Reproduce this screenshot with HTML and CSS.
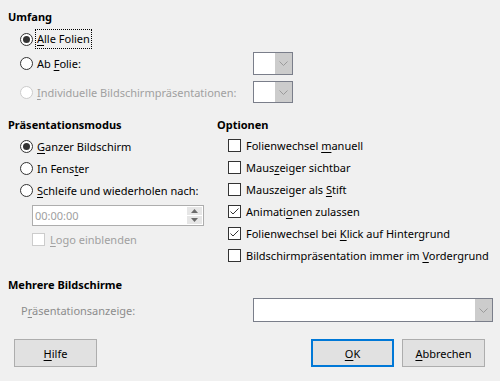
FILE: index.html
```html
<!DOCTYPE html>
<html lang="de">
<head>
<meta charset="utf-8">
<link rel="stylesheet" href="styles.css">
</head>
<body>
<div class="dialog">
  <section class="umfang">
    <div class="heading">Umfang</div>
    <div class="grid-range">
      <label class="row r1"><span class="radio on"></span><span class="focus"><u>A</u>lle Folien</span></label>
      <span></span>
      <label class="row r2"><span class="radio"></span><span>Ab <u>F</u>olie:</span></label>
      <div class="combo small c1"><span class="field"></span><span class="drop"><svg width="9" height="5" viewBox="0 0 9 5"><polyline points="0.5,0.5 4.5,4.5 8.5,0.5" fill="none" stroke="#9a9a9a" stroke-width="1"/></svg></span></div>
      <label class="row r3 disabled"><span class="radio dis"></span><span><u>I</u>ndividuelle Bildschirmpräsentationen:</span></label>
      <div class="combo small c2"><span class="field"></span><span class="drop"><svg width="9" height="5" viewBox="0 0 9 5"><polyline points="0.5,0.5 4.5,4.5 8.5,0.5" fill="none" stroke="#9a9a9a" stroke-width="1"/></svg></span></div>
    </div>
  </section>

  <section class="cols">
    <div class="col left">
      <div class="heading">Präsentationsmodus</div>
      <label class="row item"><span class="radio on"></span><span><u>G</u>anzer Bildschirm</span></label>
      <label class="row item"><span class="radio"></span><span>In Fens<u>t</u>er</span></label>
      <label class="row item"><span class="radio"></span><span><u>S</u>chleife und wiederholen nach:</span></label>
      <div class="spin">
        <span class="spin-text">00:00:00</span>
        <span class="spin-btns">
          <span class="sb"><svg width="7" height="4" viewBox="0 0 7 4"><polygon points="0,4 3.5,0 7,4" fill="#6a6a6a"/></svg></span>
          <span class="sb"><svg width="7" height="4" viewBox="0 0 7 4"><polygon points="0,0 3.5,4 7,0" fill="#6a6a6a"/></svg></span>
        </span>
      </div>
      <label class="row logo disabled"><span class="check dis"></span><span><u>L</u>ogo einblenden</span></label>
    </div>
    <div class="col right">
      <div class="heading">Optionen</div>
      <label class="row opt"><span class="check"></span><span>Folienwechsel <u>m</u>anuell</span></label>
      <label class="row opt"><span class="check"></span><span>Maus<u>z</u>eiger sichtbar</span></label>
      <label class="row opt"><span class="check"></span><span>Mauszeiger als <u>S</u>tift</span></label>
      <label class="row opt"><span class="check"><svg width="11" height="11" viewBox="0 0 11 11"><polyline points="1.5,5.5 4,8 9.5,2.5" fill="none" stroke="#333" stroke-width="1"/></svg></span><span>Animati<u>o</u>nen zulassen</span></label>
      <label class="row opt"><span class="check"><svg width="11" height="11" viewBox="0 0 11 11"><polyline points="1.5,5.5 4,8 9.5,2.5" fill="none" stroke="#333" stroke-width="1"/></svg></span><span>Folienwechsel bei <u>K</u>lick auf Hintergrund</span></label>
      <label class="row opt"><span class="check"></span><span>Bildschirmpräsentation immer im <u>V</u>ordergrund</span></label>
    </div>
  </section>

  <section class="multi">
    <div class="heading">Mehrere Bildschirme</div>
    <div class="multi-row">
      <span class="disabled-label">P<u>r</u>äsentationsanzeige:</span>
      <div class="combo wide"><span class="field"></span><span class="drop"><svg width="9" height="5" viewBox="0 0 9 5"><polyline points="0.5,0.5 4.5,4.5 8.5,0.5" fill="none" stroke="#9a9a9a" stroke-width="1"/></svg></span></div>
    </div>
  </section>

  <footer class="buttons">
    <button class="btn"><u>H</u>ilfe</button>
    <span class="spacer"></span>
    <button class="btn default"><u>O</u>K</button>
    <button class="btn"><u>A</u>bbrechen</button>
  </footer>
</div>
</body>
</html>
```

FILE: styles.css
```css
html, body {
  margin: 0;
  padding: 0;
  background: #f0f0f0;
}
body {
  width: 500px;
  height: 381px;
  overflow: hidden;
  font-family: "Noto Sans", "DejaVu Sans", sans-serif;
  font-size: 11px;
  color: #000;
}
u {
  text-decoration: underline;
  text-underline-offset: 2px;
  text-decoration-thickness: 1px;
}
.dialog {
  display: flex;
  flex-direction: column;
  padding: 9px 0 0 8px;
}
.heading {
  font-weight: bold;
  height: 16px;
  line-height: 16px;
}
.row {
  display: flex;
  align-items: center;
  white-space: nowrap;
}
.radio {
  width: 11px;
  height: 11px;
  border: 1px solid #333;
  border-radius: 50%;
  background: #fff;
  margin-right: 4px;
  flex: none;
  display: flex;
  align-items: center;
  justify-content: center;
}
.radio.on::after {
  content: "";
  width: 7px;
  height: 7px;
  border-radius: 50%;
  background: #333;
}
.radio.dis {
  border-color: #cccccc;
}
.check {
  width: 11px;
  height: 11px;
  border: 1px solid #333;
  background: #fff;
  margin-right: 5px;
  flex: none;
  display: flex;
}
.check.dis {
  border-color: #cccccc;
}
.disabled {
  color: #a0a0a0;
}

/* Umfang */
.grid-range {
  display: grid;
  grid-template-columns: 233px 40px;
  padding-left: 12px;
  margin-top: 3px;
}
.r1 { height: 22px; }
.r2 { height: 23px; margin-top: 2px; }
.r3 { height: 22px; margin-top: 6px; }
.focus {
  outline: 1px dotted #000;
  outline-offset: 0;
  padding: 1px 1px 2px 1px;
  margin-left: -1px;
}
.combo {
  display: flex;
  border: 1px solid #7a7e8a;
  background: #fff;
  box-sizing: border-box;
}
.combo .field { flex: 1; }
.combo .drop {
  width: 17px;
  background: #cccccc;
  display: flex;
  align-items: center;
  justify-content: center;
}
.small { width: 40px; }
.c1 { height: 23px; margin-top: 2px; }
.c2 { height: 22px; margin-top: 6px; }

/* Columns */
.cols {
  display: flex;
  margin-top: 14px;
}
.col { display: flex; flex-direction: column; }
.left { width: 209px; }
.left .heading { margin-bottom: 2px; }
.item {
  height: 22px;
  padding-left: 12px;
}
.spin {
  margin: 4px 0 0 24px;
  width: 172px;
  height: 21px;
  box-sizing: border-box;
  border: 1px solid #adadad;
  background: #fff;
  display: flex;
  align-items: center;
}
.spin-text {
  flex: 1;
  color: #a0a0a0;
  padding-left: 2px;
}
.spin-btns {
  display: flex;
  flex-direction: column;
  align-self: stretch;
  width: 15px;
  padding: 1px 1px 1px 0;
  gap: 1px;
}
.sb {
  flex: 1;
  background: #e6e6e6;
  display: flex;
  align-items: center;
  justify-content: center;
}
.logo {
  height: 20px;
  margin-top: 3px;
  padding-left: 24px;
}
.right .heading { margin-bottom: 2px; }
.opt {
  height: 21.9px;
  padding-left: 11px;
}

/* Multi */
.multi { margin-top: 11px; }
.multi-row {
  display: flex;
  align-items: center;
  margin-top: 5px;
}
.disabled-label {
  color: #8c8c8c;
  width: 232px;
  padding-left: 13px;
  white-space: nowrap;
}
.wide {
  width: 240px;
  height: 24px;
}

/* Buttons */
.buttons {
  display: flex;
  margin-top: 17px;
  padding: 0 15px 0 6px;
}
.spacer { flex: 1; }
.btn {
  font: inherit;
  color: #000;
  width: 83px;
  height: 28px;
  box-sizing: border-box;
  background: #e1e1e1;
  border: 1px solid #adadad;
  padding: 0;
  margin: 0;
}
.btn.default {
  border: 2px solid #0078d7;
  margin-right: 8px;
}
```
